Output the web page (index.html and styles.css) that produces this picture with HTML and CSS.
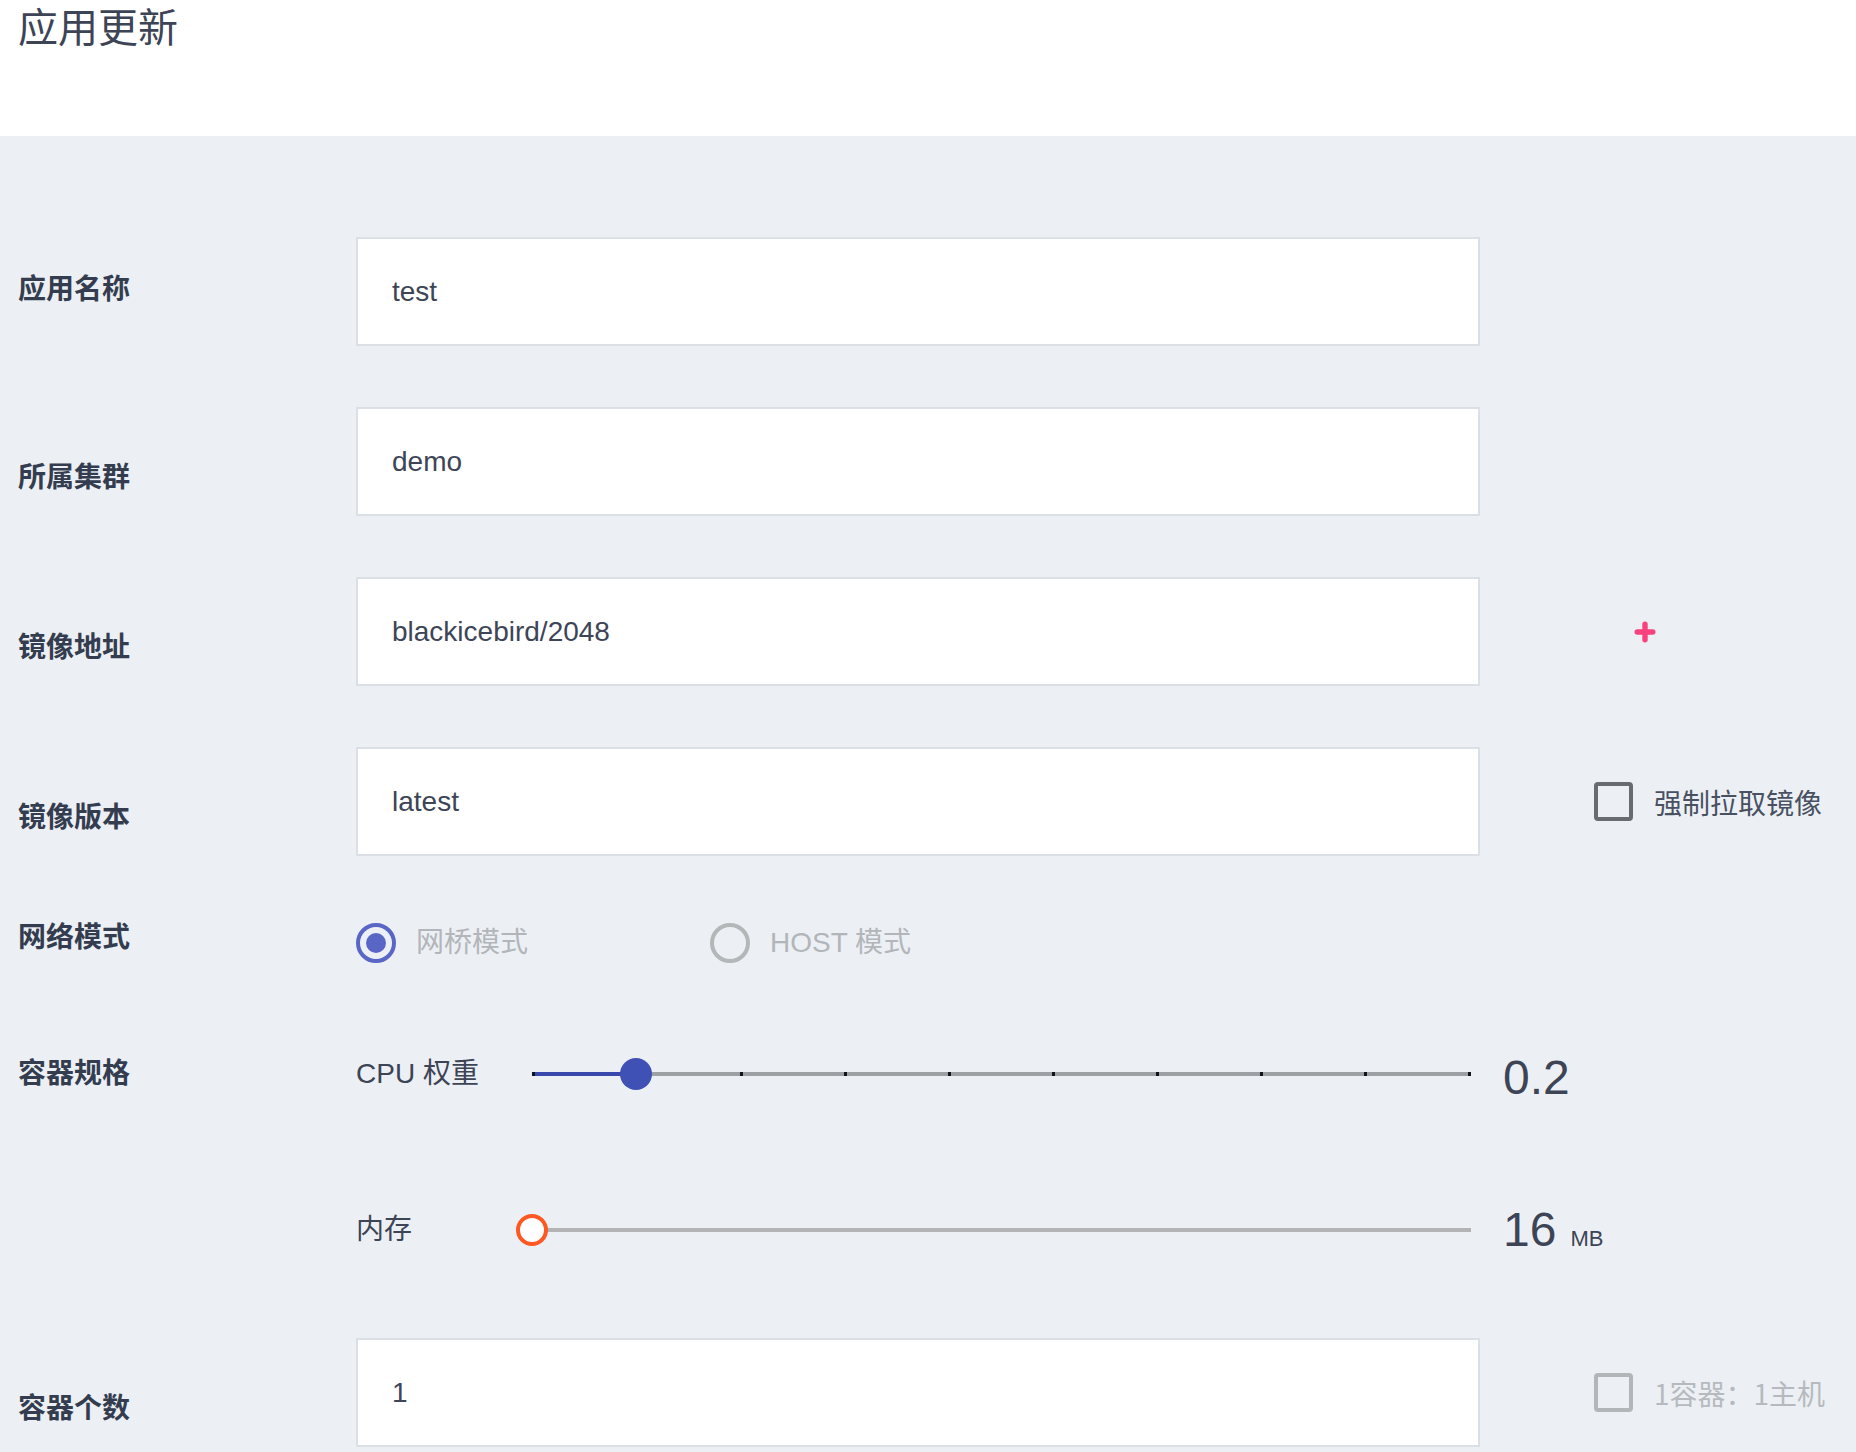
FILE: index.html
```html
<!DOCTYPE html>
<html lang="zh-CN">
<head>
<meta charset="utf-8">
<title>应用更新</title>
<link rel="stylesheet" href="styles.css">
</head>
<body>
<header class="page-header">
  <h1 class="page-title">应用更新</h1>
</header>
<main class="form">
  <div class="row row-name">
    <div class="label label-up">应用名称</div>
    <div class="field"><input class="text-input" type="text" value="test" readonly></div>
    <div class="extra"></div>
  </div>
  <div class="row row-input">
    <div class="label label-down">所属集群</div>
    <div class="field"><input class="text-input" type="text" value="demo" readonly></div>
    <div class="extra"></div>
  </div>
  <div class="row row-input">
    <div class="label label-down">镜像地址</div>
    <div class="field"><input class="text-input" type="text" value="blackicebird/2048" readonly></div>
    <div class="extra extra-plus">
      <svg class="plus-icon" width="22" height="22" viewBox="0 0 22 22"><path d="M11 3.2V18.8M3.2 11H18.8" stroke="#f8417d" stroke-width="5.4" stroke-linecap="round" fill="none"/></svg>
    </div>
  </div>
  <div class="row row-input">
    <div class="label label-down">镜像版本</div>
    <div class="field"><input class="text-input" type="text" value="latest" readonly></div>
    <div class="extra extra-check">
      <span class="checkbox"></span><span class="check-label">强制拉取镜像</span>
    </div>
  </div>
  <div class="row row-radio">
    <div class="label label-radio">网络模式</div>
    <div class="field radio-group">
      <div class="radio-option"><span class="radio radio-checked"><span class="radio-dot"></span></span><span class="radio-label">网桥模式</span></div>
      <div class="radio-option"><span class="radio"></span><span class="radio-label">HOST 模式</span></div>
    </div>
  </div>
  <div class="row row-cpu">
    <div class="label label-cpu">容器规格</div>
    <div class="slider-field">
      <span class="sub-label">CPU 权重</span>
      <div class="track track-cpu">
        <span class="track-fill"></span>
        <span class="tick"></span><span class="tick"></span><span class="tick"></span><span class="tick"></span><span class="tick"></span>
        <span class="tick"></span><span class="tick"></span><span class="tick"></span><span class="tick"></span><span class="tick"></span>
        <span class="thumb thumb-cpu"></span>
      </div>
      <span class="value">0.2</span>
    </div>
  </div>
  <div class="row row-mem">
    <div class="label"></div>
    <div class="slider-field">
      <span class="sub-label">内存</span>
      <div class="track track-mem">
        <span class="thumb thumb-mem"></span>
      </div>
      <span class="value">16<span class="unit">MB</span></span>
    </div>
  </div>
  <div class="row row-count">
    <div class="label label-down">容器个数</div>
    <div class="field"><input class="text-input" type="text" value="1" readonly></div>
    <div class="extra extra-check">
      <span class="checkbox checkbox-disabled"></span><span class="check-label check-label-disabled">1容器：1主机</span>
    </div>
  </div>
</main>
</body>
</html>
```

FILE: styles.css
```css
html, body {
  margin: 0;
  padding: 0;
}
body {
  background: #ecf0f4;
  font-family: "Liberation Sans", "Noto Sans CJK SC", sans-serif;
  color: #3c4456;
  min-height: 1452px;
}
.page-header {
  background: #ffffff;
  height: 136px;
  box-sizing: border-box;
  padding: 0 0 0 18px;
}
.page-title {
  margin: 0;
  font-size: 40px;
  line-height: 50px;
  font-weight: 400;
  color: #3c4456;
  font-family: "Noto Sans CJK SC", sans-serif;
}
.form {
  padding-top: 101px;
  display: flex;
  flex-direction: column;
}
.row {
  display: grid;
  grid-template-columns: 356px 1124px 1fr;
  align-items: center;
}
.row-input { margin-top: 61px; }
.row-radio { margin-top: 59px; height: 40px; }
.row-cpu { margin-top: 91px; height: 56px; }
.row-mem { margin-top: 100px; height: 56px; }
.row-count { margin-top: 80px; }

.label {
  padding-left: 18px;
  font-family: "Noto Sans CJK SC", sans-serif;
  font-size: 28px;
  line-height: 40px;
  font-weight: 700;
  color: #343d4f;
}
.label-up { margin-bottom: 10px; }
.label-down { margin-top: 26px; }
.label-radio { margin-bottom: 15px; }
.label-cpu { margin-bottom: 7px; }

.text-input {
  display: block;
  width: 100%;
  height: 109px;
  box-sizing: border-box;
  border: 2px solid #dae0e6;
  background: #ffffff;
  padding: 0 34px;
  font-family: "Liberation Sans", "Noto Sans CJK SC", sans-serif;
  font-size: 28px;
  color: #3d4557;
  outline: none;
  margin: 0;
  border-radius: 0;
}

.extra {
  display: flex;
  align-items: center;
}
.extra-plus { padding-left: 154px; }
.plus-icon { display: block; }
.extra-check { padding-left: 114px; }
.checkbox {
  width: 39px;
  height: 39px;
  box-sizing: border-box;
  border: 4px solid #676c71;
  border-radius: 4px;
  flex: none;
}
.checkbox-disabled { border-color: #b2b6b9; }
.check-label {
  margin-left: 21px;
  font-family: "Noto Sans CJK SC", sans-serif;
  font-size: 28px;
  line-height: 40px;
  color: #485062;
  white-space: nowrap;
}
.check-label-disabled { color: #b6babe; }

.radio-group {
  display: flex;
  align-items: center;
}
.radio-option {
  width: 354px;
  display: flex;
  align-items: center;
}
.radio {
  width: 40px;
  height: 40px;
  box-sizing: border-box;
  border: 4px solid #b4b6b8;
  border-radius: 50%;
  display: flex;
  align-items: center;
  justify-content: center;
  flex: none;
}
.radio-checked { border-color: #5966c6; }
.radio-dot {
  width: 20px;
  height: 20px;
  border-radius: 50%;
  background: #5966c6;
}
.radio-label {
  margin-left: 20px;
  font-family: "Liberation Sans", "Noto Sans CJK SC", sans-serif;
  font-size: 28px;
  line-height: 40px;
  color: #b2b5b9;
  white-space: nowrap;
}

.slider-field {
  grid-column: 2 / 4;
  display: flex;
  align-items: center;
  height: 56px;
}
.sub-label {
  width: 176px;
  font-size: 28px;
  line-height: 40px;
  color: #3c4456;
  white-space: nowrap;
}
.track {
  position: relative;
  width: 939px;
  height: 4px;
  display: flex;
  justify-content: space-between;
}
.track-cpu { background: #9ea1a4; }
.track-mem { background: #b1b3b5; }
.track-fill {
  position: absolute;
  left: 0;
  top: 0;
  width: 104px;
  height: 4px;
  background: #3949ab;
}
.tick {
  position: relative;
  width: 3px;
  height: 4px;
  background: #111418;
  z-index: 1;
}
.thumb {
  position: absolute;
  top: -14px;
  width: 32px;
  height: 32px;
  box-sizing: border-box;
  border-radius: 50%;
  z-index: 2;
}
.thumb-cpu {
  left: 88px;
  background: #3f51b5;
}
.thumb-mem {
  left: -16px;
  background: #ffffff;
  border: 4px solid #ff5722;
}
.value {
  margin-left: 32px;
  padding-top: 8px;
  font-size: 48px;
  line-height: 48px;
  color: #3c4456;
  white-space: nowrap;
}
.unit {
  margin-left: 14px;
  font-size: 22px;
}
```
